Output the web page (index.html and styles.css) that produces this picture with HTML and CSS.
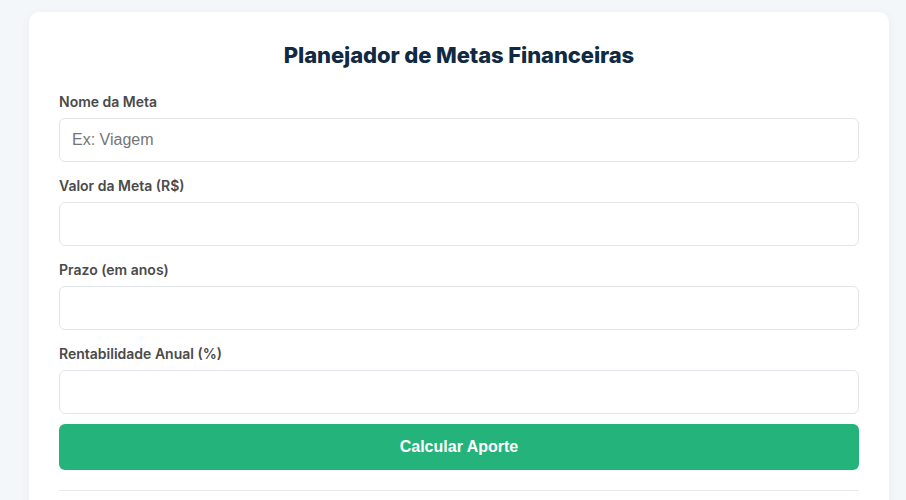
FILE: index.html
```html
<!DOCTYPE html>
<html lang="pt-BR">
<head>
<meta charset="utf-8">
<title>Planejador de Metas Financeiras</title>
<link rel="stylesheet" href="styles.css">
</head>
<body>
<main class="card">
  <h2 class="title">Planejador de Metas Financeiras</h2>
  <form class="form">
    <div class="field">
      <label class="label" for="nome">Nome da Meta</label>
      <input class="input" id="nome" type="text" placeholder="Ex: Viagem">
    </div>
    <div class="field">
      <label class="label" for="valor">Valor da Meta (R$)</label>
      <input class="input" id="valor" type="text">
    </div>
    <div class="field">
      <label class="label" for="prazo">Prazo (em anos)</label>
      <input class="input" id="prazo" type="text">
    </div>
    <div class="field last">
      <label class="label" for="rent">Rentabilidade Anual (%)</label>
      <input class="input" id="rent" type="text">
    </div>
    <button class="btn" type="button">Calcular Aporte</button>
  </form>
  <hr class="divider">
</main>
</body>
</html>
```
FILE: styles.css
```css
html, body {
  margin: 0;
  background: #f4f7fa;
}
body {
  padding: 12px 17px 0 29px;
  font-family: Inter, "Noto Sans", sans-serif;
}
.card {
  background: #ffffff;
  border-radius: 10px;
  box-shadow: 0 2px 10px rgba(30, 50, 80, 0.06);
  padding: 30px 30px 30px 30px;
  min-height: 600px;
}
.title {
  margin: 0 0 24px 0;
  text-align: center;
  font-size: 22px;
  line-height: 27px;
  font-weight: 800;
  color: #102a43;
  letter-spacing: -0.1px;
}
.form {
  display: flex;
  flex-direction: column;
}
.field {
  display: flex;
  flex-direction: column;
  margin-bottom: 15px;
}
.field.last {
  margin-bottom: 10px;
}
.label {
  font-size: 14px;
  line-height: 17px;
  font-weight: 600;
  color: #4a4a4a;
  margin-bottom: 8px;
}
.input {
  box-sizing: border-box;
  height: 44px;
  border: 1px solid #e1e5ea;
  border-radius: 6px;
  padding: 0 12px;
  font-family: "Liberation Sans", Arial, sans-serif;
  font-size: 16px;
  color: #333;
  background: #fff;
  outline: none;
}
.input::placeholder {
  color: #757575;
}
.btn {
  height: 46px;
  border: none;
  border-radius: 6px;
  background: #25b37c;
  color: #ffffff;
  font-family: "Liberation Sans", Arial, sans-serif;
  font-size: 16px;
  font-weight: 700;
  cursor: pointer;
}
.divider {
  border: none;
  border-top: 1px solid #e6e9ef;
  margin: 20px 0 0 0;
}
```
